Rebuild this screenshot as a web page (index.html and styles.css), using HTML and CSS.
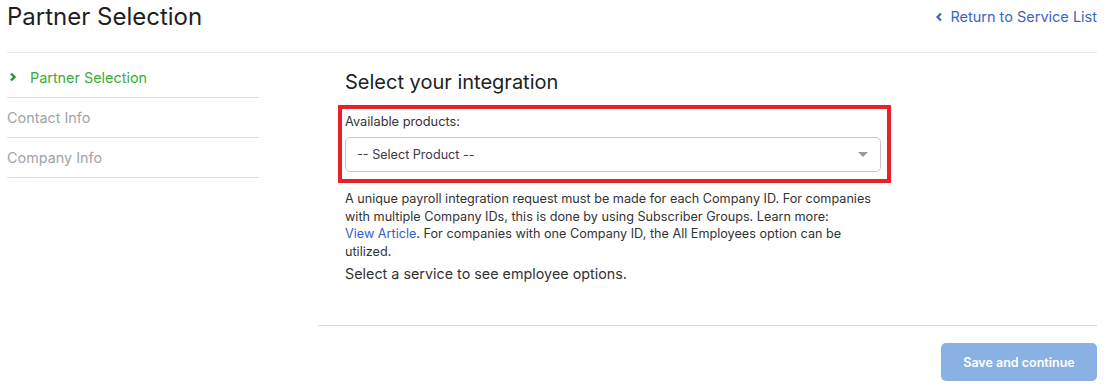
FILE: index.html
```html
<!DOCTYPE html>
<html>
<head>
<meta charset="utf-8">
<link rel="stylesheet" href="styles.css">
</head>
<body>
<div class="page">
  <header class="header">
    <h1 class="title">Partner Selection</h1>
    <a class="back" href="#"><svg class="back-icon" width="8" height="10" viewBox="0 0 8 10"><path d="M6 1.5 L2.5 5 L6 8.5" fill="none" stroke="currentColor" stroke-width="2.2"/></svg>Return to Service List</a>
  </header>
  <div class="layout">
    <nav class="sidebar">
      <div class="step active"><svg class="step-icon" width="8" height="10" viewBox="0 0 8 10"><path d="M2 1.5 L5.5 5 L2 8.5" fill="none" stroke="currentColor" stroke-width="2.4"/></svg>Partner Selection</div>
      <div class="step">Contact Info</div>
      <div class="step">Company Info</div>
    </nav>
    <main class="main">
      <div class="content">
        <h2 class="heading">Select your integration</h2>
        <div class="highlight">
          <div class="label">Available products:</div>
          <div class="select"><span>-- Select Product --</span><span class="caret"></span></div>
        </div>
        <p class="note">A unique payroll integration request must be made for each Company ID. For companies with multiple Company IDs, this is done by using Subscriber Groups. Learn more: <span class="nowrap"><a class="link" href="#">View Article</a>.</span> For companies with one Company ID, the All Employees option can be utilized.</p>
        <p class="hint">Select a service to see employee options.</p>
      </div>
      <div class="footer">
        <button class="save">Save and continue</button>
      </div>
    </main>
  </div>
</div>
</body>
</html>
```
FILE: styles.css
```css
* { box-sizing: border-box; }
body {
  margin: 0;
  font-family: Inter, "Noto Sans", sans-serif;
  color: #222;
  background: #fff;
}
.page {
  width: 1090px;
  margin-left: 7px;
}
.header {
  height: 53px;
  border-bottom: 1px solid #e8e8e8;
  display: flex;
  justify-content: space-between;
  align-items: flex-start;
}
.title {
  margin: 3px 0 0 0;
  font-size: 24px;
  font-weight: 400;
  line-height: 28px;
  color: #1f1f1f;
}
.back {
  margin-top: 8px;
  font-size: 14.5px;
  line-height: 18px;
  color: #3d63c4;
  text-decoration: none;
  display: flex;
  align-items: center;
}
.back-icon { margin-right: 7px; }
.layout {
  display: flex;
  gap: 59px;
}
.sidebar {
  width: 252px;
  margin-top: 5px;
}
.step {
  height: 40px;
  border-bottom: 1px solid #dedede;
  display: flex;
  align-items: center;
  font-size: 14.4px;
  color: #a0a4a9;
  padding-bottom: 1px;
}
.step.active {
  color: #3aab3a;
}
.step-icon {
  color: #1f9a2e;
  margin: 0 13px 0 2px;
}
.main {
  flex: 1;
}
.content {
  padding: 17px 0 0 27px;
  border-bottom: 1px solid #d8dcdc;
  height: 273px;
}
.heading {
  margin: 0 0 11px 0;
  font-size: 20px;
  font-weight: 400;
  line-height: 24px;
  color: #222;
}
.highlight {
  margin-left: -7px;
  width: 553px;
  border: 4px solid #e8202a;
  padding: 5px 6px 7px 3px;
}
.label {
  font-size: 12.8px;
  line-height: 16px;
  color: #333;
  margin-bottom: 7px;
}
.select {
  height: 35px;
  border: 1px solid #c4c8cc;
  border-radius: 5px;
  display: flex;
  align-items: center;
  justify-content: space-between;
  padding: 0 12px 0 11px;
  font-size: 12.6px;
  color: #3a3a4a;
}
.caret {
  width: 0;
  height: 0;
  border-left: 5px solid transparent;
  border-right: 5px solid transparent;
  border-top: 5px solid #9a9a9a;
}
.note {
  margin: 7px 0 0 0;
  width: 540px;
  font-size: 12.65px;
  line-height: 17.5px;
  color: #333;
}
.nowrap {
  white-space: nowrap;
}
.link {
  color: #2f5fc9;
  text-decoration: none;
}
.hint {
  margin: 4px 0 0 0;
  font-size: 14.35px;
  line-height: 20px;
  color: #333;
}
.footer {
  display: flex;
  justify-content: flex-end;
  padding-top: 17px;
}
.save {
  width: 156px;
  height: 38px;
  border: none;
  border-radius: 5px;
  background: #8ab1e3;
  color: #fff;
  font-family: Inter, "Noto Sans", sans-serif;
  font-size: 12.5px;
  font-weight: 600;
}
```
